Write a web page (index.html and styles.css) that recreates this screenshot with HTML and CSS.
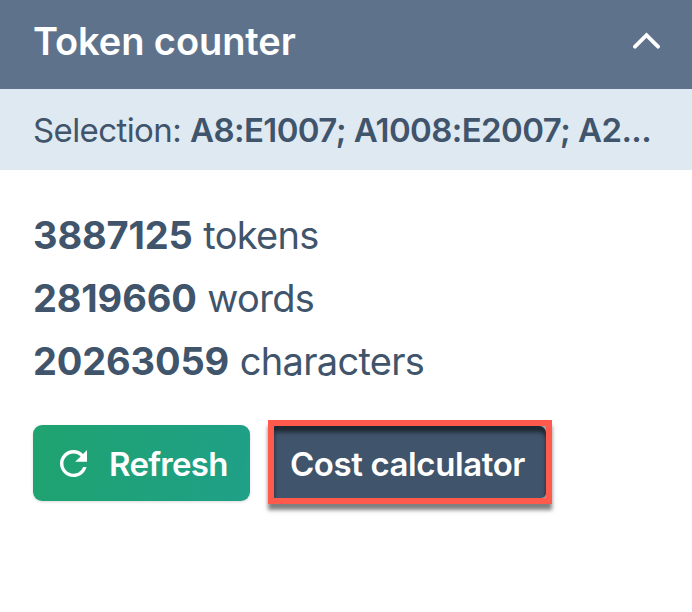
FILE: index.html
```html
<!DOCTYPE html>
<html lang="en">
  <head>
    <meta charset="UTF-8" />
    <meta name="viewport" content="width=device-width, initial-scale=1.0" />
    <title>Token counter</title>
    <link rel="stylesheet" href="styles.css">
  </head>
  <body>
    <div class="header">
      <h2>Token counter</h2>
      <svg class="chevron" width="28" height="18" viewBox="0 0 28 18">
        <path d="M3 14.7 L14.5 3.2 L26 14.7" />
      </svg>
    </div>
    <div class="selection">
      <span class="label">Selection:</span>
      <b class="range">A8:E1007; A1008:E2007; A2...</b>
    </div>
    <div class="content">
      <ul class="stats">
        <li><b>3887125</b> <span>tokens</span></li>
        <li><b>2819660</b> <span>words</span></li>
        <li><b>20263059</b> <span>characters</span></li>
      </ul>
      <div class="actions">
        <button class="refresh">
          <svg width="27" height="27" viewBox="4 4 16 16">
            <path d="M17.65 6.35C16.2 4.9 14.21 4 12 4c-4.42 0-7.99 3.58-7.99 8s3.57 8 7.99 8c3.73 0 6.84-2.55 7.73-6h-2.08c-.82 2.33-3.04 4-5.65 4-3.31 0-6-2.69-6-6s2.69-6 6-6c1.66 0 3.14.69 4.22 1.78L13 11h7V4l-2.35 2.35z" />
          </svg>
          <span>Refresh</span>
        </button>
        <div class="highlight">
          <button class="calculator">Cost calculator</button>
        </div>
      </div>
    </div>
  </body>
</html>
```
FILE: styles.css
```css
* {
  box-sizing: border-box;
}
body {
  margin: 0;
  font-family: Inter, sans-serif;
  color: #40546b;
  background: white;
}
.header {
  display: flex;
  align-items: center;
  justify-content: space-between;
  height: 89px;
  padding: 0 32px 7px 33px;
  background: #5e738b;
  color: white;
}
h2 {
  margin: 0;
  font-size: 38px;
  font-weight: 600;
  letter-spacing: -0.08px;
}
.chevron {
  fill: none;
  stroke: white;
  stroke-width: 3.8;
  stroke-linecap: round;
}
.selection {
  display: flex;
  align-items: center;
  gap: 9px;
  height: 81px;
  padding: 0 33px;
  background: #dfe9f2;
  font-size: 33px;
  letter-spacing: -0.6px;
  white-space: nowrap;
}
b {
  font-weight: 600;
}
.content {
  padding: 34px 33px;
}
.stats {
  margin: 0;
  padding: 0;
  list-style: none;
  font-size: 38px;
  line-height: 63px;
}
.stats b {
  font-weight: 700;
  letter-spacing: -0.15px;
}
.stats span {
  letter-spacing: -0.7px;
}
.actions {
  display: flex;
  align-items: flex-start;
  margin-top: 27px;
}
button {
  border: none;
  font-family: inherit;
  font-size: 33px;
  font-weight: 600;
  color: white;
}
.refresh {
  display: flex;
  align-items: center;
  gap: 22px;
  width: 217px;
  height: 76px;
  margin-top: 5px;
  padding: 2px 0 0 27px;
  border-radius: 9px;
  background: linear-gradient(100deg, #1fa36f, #1fa088);
  box-shadow: 0 1px 3px rgba(0, 0, 0, 0.15);
  letter-spacing: -0.7px;
}
.refresh svg {
  flex: none;
  margin-top: -2px;
  fill: white;
}
.highlight {
  width: 284px;
  height: 84px;
  margin-left: 18px;
  border: 6px solid #ff5a4c;
  background: #9a9fa5;
  box-shadow: 0 6px 4px rgba(0, 0, 0, 0.5);
}
.calculator {
  display: block;
  width: 100%;
  height: 100%;
  padding: 4px 5px 0 0;
  border-radius: 1px 7px 5px 1px;
  background: #40546b;
  box-shadow: inset 0 6px 4px rgba(0, 0, 0, 0.55);
  letter-spacing: -0.4px;
}
```
